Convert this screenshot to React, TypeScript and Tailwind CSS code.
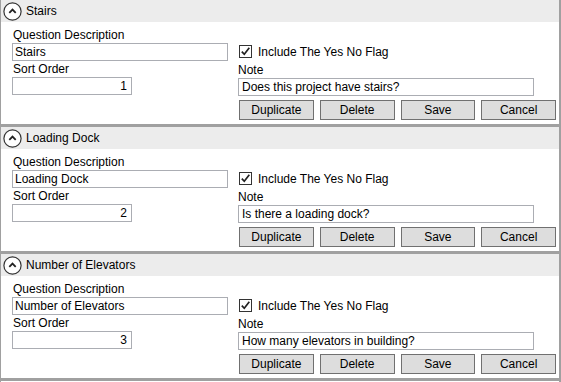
import React from "react";

type Item = { title: string; order: string; note: string };

const items: Item[] = [
  { title: "Stairs", order: "1", note: "Does this project have stairs?" },
  { title: "Loading Dock", order: "2", note: "Is there a loading dock?" },
  { title: "Number of Elevators", order: "3", note: "How many elevators in building?" },
];

function ExpandIcon() {
  return (
    <svg width="19" height="19" viewBox="0 0 19 19" className="shrink-0">
      <circle cx="9.5" cy="9.5" r="8.6" fill="#ffffff" stroke="#333333" strokeWidth="1.2" />
      <path d="M6.3 10.8 L9.5 7.6 L12.7 10.8" fill="none" stroke="#222222" strokeWidth="1.8" />
    </svg>
  );
}

function CheckBox() {
  return (
    <div className="w-[13px] h-[13px] border border-[#333333] bg-white flex items-center justify-center shrink-0">
      <svg width="11" height="11" viewBox="0 0 11 11">
        <path d="M1.8 5.6 L4.3 8.3 L9.3 1.8" fill="none" stroke="#212121" strokeWidth="1.7" />
      </svg>
    </div>
  );
}

function Btn({ label }: { label: string }) {
  return (
    <div className="w-[75px] h-[20px] bg-[#dddddd] border border-[#707070] flex items-center justify-center text-[12px] text-black leading-none">
      {label}
    </div>
  );
}

function Section({ item }: { item: Item }) {
  return (
    <div className="h-[127px] border-b-[3px] border-[#a0a0a0] flex flex-col">
      <div className="h-[22px] bg-[#ececec] flex items-center pl-[2px] gap-[4px]">
        <ExpandIcon />
        <span className="text-[12px] text-black leading-none">{item.title}</span>
      </div>
      <div className="bg-white flex-1 pt-[5px] pl-[11px] grid grid-cols-[216px_318px] gap-x-[10px] grid-rows-[16px_18px_16px_18px_25px]">
        <div className="text-[12px] leading-[16px] pl-[1px]">Question Description</div>
        <div />
        <div className="border border-[#abadb3] h-[18px] flex items-center px-[2px] text-[12px] leading-none">
          {item.title}
        </div>
        <div className="flex items-center gap-[6px] pl-[1px] -mt-[1px]">
          <CheckBox />
          <span className="text-[12px] leading-none">Include The Yes No Flag</span>
        </div>
        <div className="text-[12px] leading-[16px] pl-[1px]">Sort Order</div>
        <div className="text-[12px] leading-[16px] pt-[1px]">Note</div>
        <div className="border border-[#abadb3] h-[18px] w-[120px] flex items-center justify-end px-[4px] text-[12px] leading-none">
          {item.order}
        </div>
        <div className="border border-[#abadb3] h-[18px] w-[296px] mt-[1px] flex items-center px-[3px] text-[12px] leading-none">
          {item.note}
        </div>
        <div />
        <div className="pt-[5px] pl-[1px] flex gap-[6px]">
          <Btn label="Duplicate" />
          <Btn label="Delete" />
          <Btn label="Save" />
          <Btn label="Cancel" />
        </div>
      </div>
    </div>
  );
}

export default function App() {
  return (
    <div
      className="w-[561px] h-[382px] overflow-hidden bg-white border-l border-r-2 border-[#a0a0a0] text-black"
      style={{ fontFamily: '"Liberation Sans", Arial, sans-serif' }}
    >
      {items.map((it) => (
        <Section key={it.title} item={it} />
      ))}
    </div>
  );
}
